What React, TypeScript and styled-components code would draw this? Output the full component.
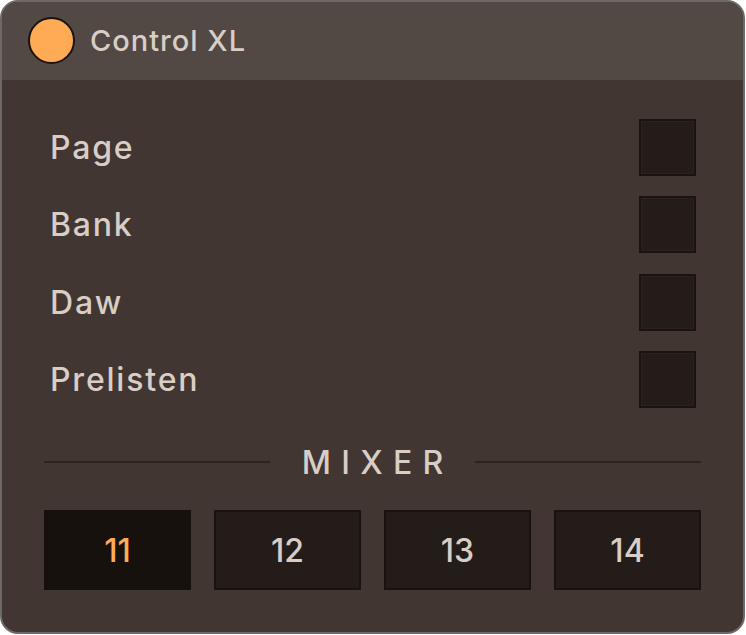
import React from "react";
import styled, { createGlobalStyle } from "styled-components";

const Global = createGlobalStyle`
  html, body { margin: 0; padding: 0; background: #ffffff; }
  body { font-family: Inter, "Noto Sans", sans-serif; }
  * { box-sizing: border-box; }
`;

const Window = styled.div`
  width: 745px;
  height: 634px;
  border: 2px solid #6d6965;
  border-radius: 18px;
  background: #413632;
  overflow: hidden;
  display: flex;
  flex-direction: column;
`;

const Header = styled.div`
  height: 78px;
  background: #524944;
  display: flex;
  align-items: center;
  padding-left: 26px;
  gap: 15px;
`;

const Dot = styled.div`
  width: 47px;
  height: 47px;
  border-radius: 50%;
  background: #ffaa55;
  border: 2px solid #1a1310;
`;

const Title = styled.div`
  font-size: 29px;
  font-weight: 500;
  color: #d8cec5;
  letter-spacing: 1px;
`;

const Body = styled.div`
  flex: 1;
  padding: 39px 42px 42px;
  display: flex;
  flex-direction: column;
`;

const Rows = styled.div`
  display: flex;
  flex-direction: column;
  gap: 20.5px;
`;

const Row = styled.div`
  height: 57px;
  display: flex;
  align-items: center;
  justify-content: space-between;
  padding: 0 5px 0 6px;
`;

const Label = styled.span`
  font-size: 32px;
  font-weight: 500;
  color: #d8cec5;
  letter-spacing: 1.8px;
`;

const Check = styled.div`
  width: 57px;
  height: 57px;
  background: #231c18;
  border: 2px solid #1a1310;
  box-shadow: inset 0 0 0 1px #2a221e;
`;

const Divider = styled.div`
  margin-top: 36px;
  height: 36px;
  display: flex;
  align-items: center;
  gap: 32px;
`;

const Line = styled.div`
  flex: 1;
  height: 2px;
  background: #2d2420;
`;

const DividerText = styled.span`
  font-size: 32px;
  font-weight: 500;
  color: #d8cec5;
  letter-spacing: 0.32em;
  margin-right: -0.32em;
`;

const Buttons = styled.div`
  margin-top: 30px;
  display: grid;
  grid-template-columns: repeat(4, 1fr);
  gap: 23px;
`;

const MixButton = styled.div<{ $active?: boolean }>`
  height: 80px;
  display: flex;
  align-items: center;
  justify-content: center;
  background: ${(p) => (p.$active ? "#17110e" : "#231c18")};
  border: 2px solid ${(p) => (p.$active ? "#17110e" : "#19120f")};
  color: ${(p) => (p.$active ? "#ffaa55" : "#d8cec5")};
  font-size: 32px;
  font-weight: 500;
`;

const labels = ["Page", "Bank", "Daw", "Prelisten"];
const channels = [11, 12, 13, 14];

export default function App() {
  return (
    <>
      <Global />
      <Window>
        <Header>
          <Dot />
          <Title>Control XL</Title>
        </Header>
        <Body>
          <Rows>
            {labels.map((l) => (
              <Row key={l}>
                <Label>{l}</Label>
                <Check />
              </Row>
            ))}
          </Rows>
          <Divider>
            <Line />
            <DividerText>MIXER</DividerText>
            <Line />
          </Divider>
          <Buttons>
            {channels.map((c, i) => (
              <MixButton key={c} $active={i === 0}>
                {c}
              </MixButton>
            ))}
          </Buttons>
        </Body>
      </Window>
    </>
  );
}
